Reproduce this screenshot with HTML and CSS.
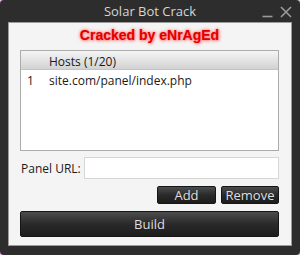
FILE: index.html
```html
<!DOCTYPE html>
<html>
<head>
<meta charset="utf-8">
<link rel="stylesheet" href="styles.css">
</head>
<body>
<div class="window">
  <div class="titlebar">
    <span class="spacer"></span>
    <span class="title">Solar Bot Crack</span>
    <span class="controls">
      <svg class="ctl" width="12" height="12" viewBox="0 0 12 12"><path d="M0.5 10.5h10" stroke="#9a9a9a" stroke-width="1.6"/></svg>
      <svg class="ctl" width="12" height="12" viewBox="0 0 12 12"><path d="M1 1L11 11M11 1L1 11" stroke="#9a9a9a" stroke-width="1.6"/></svg>
    </span>
  </div>
  <div class="panel">
    <div class="banner">Cracked by eNrAgEd</div>
    <div class="list">
      <div class="list-head"><span></span><span>Hosts (1/20)</span></div>
      <div class="list-row"><span>1</span><span>site.com/panel/index.php</span></div>
    </div>
    <div class="url-row">
      <label class="url-label">Panel URL:</label>
      <div class="url-input"></div>
    </div>
    <div class="btn-row">
      <div class="btn btn-add">Add</div>
      <div class="btn btn-remove">Remove</div>
    </div>
    <div class="btn btn-build">Build</div>
  </div>
</div>
</body>
</html>
```

FILE: styles.css
```css
html, body {
  margin: 0;
  padding: 0;
  background: #e4b6e4;
}
body {
  width: 300px;
  height: 255px;
  font-family: "Open Sans", "Noto Sans", sans-serif;
}
.window {
  width: 300px;
  height: 255px;
  background: #2d2d2d;
  border-radius: 4px;
  display: flex;
  flex-direction: column;
  box-sizing: border-box;
}
.titlebar {
  height: 22px;
  display: grid;
  grid-template-columns: 1fr auto 1fr;
  align-items: center;
}
.title {
  color: #d6d6d6;
  font-size: 13px;
  line-height: 22px;
}
.controls {
  justify-self: end;
  display: flex;
  gap: 6px;
  padding-right: 8px;
  padding-top: 2px;
}
.panel {
  margin: 0 8px;
  height: 224px;
  box-sizing: border-box;
  background: #f4f4f4;
  border: 1px solid #9c9c9c;
  padding: 0 12px 8px 11px;
  display: flex;
  flex-direction: column;
}
.banner {
  height: 27px;
  line-height: 25px;
  text-align: center;
  font-family: "Liberation Sans", Arial, sans-serif;
  font-weight: bold;
  font-size: 14px;
  color: #e00000;
  text-shadow: 0 0 1px #ff7070, 0 0 3px #ff8c8c, 0 0 4px #ffa6a6, 1px 1px 3px #ff9a9a;
}
.list {
  height: 101px;
  box-sizing: border-box;
  background: #ffffff;
  border: 1px solid #acacac;
  font-size: 12px;
  color: #1a1a1a;
}
.list-head {
  height: 19px;
  box-sizing: border-box;
  background: linear-gradient(#f4f4f4, #e4e4e4 50%, #d2d2d2);
  border-bottom: 1px solid #c4c4c4;
  display: grid;
  grid-template-columns: 28px 1fr;
  line-height: 17px;
  padding-top: 2px;
}
.list-row {
  display: grid;
  grid-template-columns: 28px 1fr;
  line-height: 18px;
  padding-top: 2px;
}
.list-row span:first-child {
  padding-left: 6px;
}
.url-row {
  margin-top: 6px;
  height: 22px;
  display: flex;
  align-items: center;
}
.url-label {
  width: 63px;
  font-size: 12px;
  color: #1a1a1a;
  padding-left: 1px;
}
.url-input {
  flex: 1;
  height: 22px;
  box-sizing: border-box;
  background: #ffffff;
  border: 1px solid #d6d6d6;
}
.btn-row {
  margin-top: 7px;
  display: flex;
  justify-content: flex-end;
  gap: 5px;
}
.btn {
  box-sizing: border-box;
  background: linear-gradient(#4c4c4c, #2a2a2a 50%, #1c1c1c);
  border: 1px solid #151515;
  border-radius: 2px;
  color: #dedede;
  text-align: center;
  font-size: 13px;
}
.btn-add {
  width: 59px;
  height: 18px;
  line-height: 16px;
}
.btn-remove {
  width: 58px;
  height: 18px;
  line-height: 16px;
}
.btn-build {
  margin-top: 7px;
  height: 26px;
  line-height: 24px;
}
```
